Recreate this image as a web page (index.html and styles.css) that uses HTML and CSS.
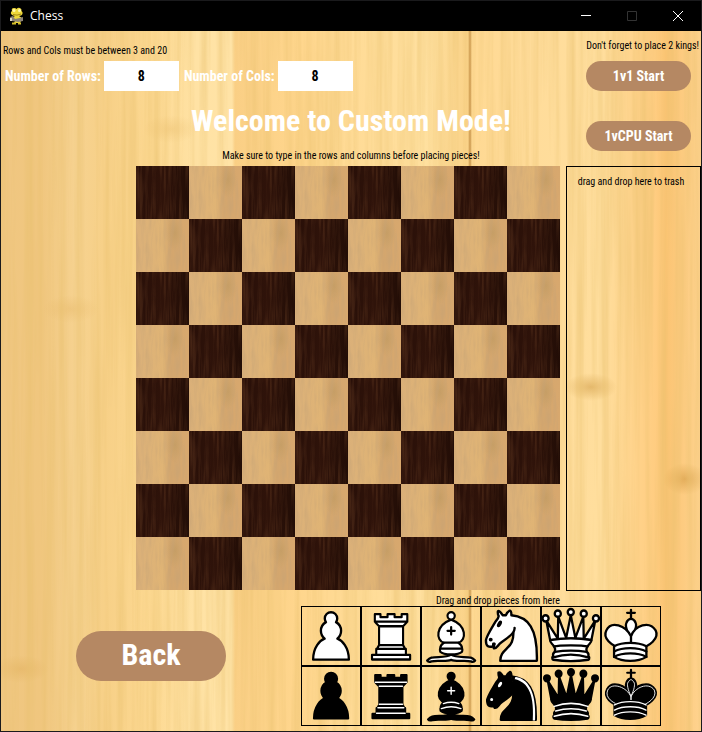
FILE: index.html
```html
<!DOCTYPE html>
<html lang="en">
<head>
<meta charset="utf-8">
<title>Chess</title>
<link rel="stylesheet" href="styles.css">
</head>
<body>
<svg class="defs" aria-hidden="true">
  <defs>
    <g id="pawn">
      <path d="M22.5 9c-2.21 0-4 1.79-4 4 0 .89.29 1.71.78 2.38C17.33 16.5 16 18.59 16 21c0 2.03.94 3.84 2.41 5.03C15.41 27.09 11 31.58 11 39.5H34C34 31.58 29.59 27.09 26.59 26.03 28.06 24.84 29 23.03 29 21 29 18.59 27.67 16.5 25.72 15.38 26.21 14.71 26.5 13.89 26.5 13c0-2.21-1.79-4-4-4z"/>
    </g>
    <g id="rook">
      <path d="M9 39H36V36H9zM12 36V32H33V36zM11 14V9H15V11H20V9H25V11H30V9H34V14L31 17H14zM31 17V29.5L32.5 32H12.5L14 29.5V17zM14 29.5H31M11 14H34"/>
    </g>
    <g id="bishop">
      <path d="M9 36C12.39 35.03 19.11 36.43 22.5 34 25.89 36.43 32.61 35.03 36 36 36 36 37.65 36.54 39 38 38.32 38.97 37.35 38.99 36 38.5 32.61 37.53 25.89 38.96 22.5 37.5 19.11 38.96 12.39 37.53 9 38.5 7.65 38.99 6.68 38.97 6 38 7.35 36.54 9 36 9 36z"/>
      <path d="M15 32C17.5 34.5 27.5 34.5 30 32 30.5 30.5 30 30 30 30 30 27.5 27.5 26 27.5 26 33 24.5 33.5 14.5 22.5 10.5 11.5 14.5 12 24.5 17.5 26 17.5 26 15 27.5 15 30 15 30 14.5 30.5 15 32z"/>
      <circle cx="22.5" cy="8" r="2.5"/>
    </g>
    <g id="knight">
      <path d="M22 10C32.5 11 38.5 18 38 39H15C15 30 25 32.5 23 18"/>
      <path d="M24 18C24.38 20.91 18.45 25.37 16 27 13 29 13.18 31.34 11 31 9.958 30.06 12.41 27.96 11 28 10 28 11.19 29.23 10 30 9 30 5.997 31 6 26 6 24 12 14 12 14 12 14 13.89 12.1 14 10.5 13.27 9.506 13.5 8.5 13.5 7.5 14.5 6.5 16.5 10 16.5 10H18.5C18.5 10 19.28 8.008 21 7 22 7 22 10 22 10"/>
    </g>
    <g id="knight-eye">
      <circle cx="9" cy="25.5" r=".5"/>
      <ellipse cx="14.5" cy="15.5" rx=".5" ry="1.5" transform="rotate(30 14.5 15.5)"/>
    </g>
    <g id="queen">
      <path d="M9 26C17.5 24.5 30 24.5 36 26L38.5 13.5 31 25 30.7 10.9 25.5 24.5 22.5 10 19.5 24.5 14.3 10.9 14 25 6.5 13.5z"/>
      <path d="M9 26C9 28 10.5 28 11.5 30 12.5 31.5 12.5 31 12 33.5 10.5 34.5 11 36 11 36 9.5 37.5 11 38.5 11 38.5 17.5 39.5 27.5 39.5 34 38.5 34 38.5 35.5 37.5 34 36 34 36 34.5 34.5 33 33.5 32.5 31 32.5 31.5 33.5 30 34.5 28 36 28 36 26 27.5 24.5 17.5 24.5 9 26z"/>
      <circle cx="6" cy="12" r="2"/><circle cx="14" cy="9" r="2"/><circle cx="22.5" cy="8" r="2"/><circle cx="31" cy="9" r="2"/><circle cx="39" cy="12" r="2"/>
    </g>
    <g id="king">
      <path d="M22.5 11.63V6M20 8H25"/>
      <path d="M22.5 25C22.5 25 27 17.5 25.5 14.5 25.5 14.5 24.5 12 22.5 12 20.5 12 19.5 14.5 19.5 14.5 18 17.5 22.5 25 22.5 25"/>
      <path d="M11.5 37C17 40.5 27 40.5 32.5 37V30C32.5 30 41.5 25.5 38.5 19.5 34.5 13 25 16 22.5 23.5V27 23.5C19 16 9.5 13 6.5 19.5 3.5 25.5 11.5 29.5 11.5 29.5z"/>
    </g>
    <path id="king-bands" d="M11.5 30C17 27 27 27 32.5 30M11.5 33.5C17 30.5 27 30.5 32.5 33.5M11.5 37C17 34 27 34 32.5 37"/>
  </defs>
</svg>

<div class="window">
  <header class="titlebar">
    <svg class="logo" viewBox="0 0 16 18" aria-hidden="true">
      <path fill="#eed83a" d="M3 4Q2 1 5 1 7 1 7.500 2 9 0 11 1 13 2 12.500 4 14 5 13.500 7 12.500 9 10 9L13 11 11 16H5L6 14 2 12 4 10 6 9Q1 8 2 5z"/>
      <circle cx="5" cy="3.500" r="1.500" fill="#fff9b0"/><circle cx="10.500" cy="3.500" r="1.500" fill="#fff9b0"/>
      <path stroke="#a88c13" fill="none" d="M4 7.500Q8 9 12 7"/>
      <path fill="#8e8578" d="M1 10L4 9 6 12 11 11 14 10 14 14 9 15 3 14z"/>
      <path fill="#d8d4c6" d="M1 11h2v3H1z"/>
      <path stroke="#d4be2a" stroke-width="2" d="M3 16.500H7M9 16.500H12"/>
    </svg>
    <span class="app-name">Chess</span>
    <div class="window-controls">
      <button type="button" aria-label="Minimize"><svg viewBox="0 0 10 10"><path d="M0 4.500H10"/></svg></button>
      <button type="button" aria-label="Maximize" disabled><svg viewBox="0 0 10 10"><path d="M.5.5H9.500V9.500H.5z"/></svg></button>
      <button type="button" aria-label="Close"><svg viewBox="0 0 10 10"><path d="M0 0L10 10M10 0L0 10"/></svg></button>
    </div>
  </header>

  <main class="stage">
    <section class="setup">
      <form class="size-form">
        <p class="note">Rows and Cols must be between 3 and 20</p>
        <div class="fields">
          <label for="rows">Number of Rows:</label>
          <input id="rows" type="text" inputmode="numeric" value="8">
          <label for="cols">Number of Cols:</label>
          <input id="cols" type="text" inputmode="numeric" value="8">
        </div>
      </form>
      <div class="intro">
        <h1>Welcome to Custom Mode!</h1>
        <p class="note">Make sure to type in the rows and columns before placing pieces!</p>
      </div>
      <div class="start">
        <p class="note">Don't forget to place 2 kings!</p>
        <button class="pill" type="button">1v1 Start</button>
        <button class="pill" type="button">1vCPU Start</button>
      </div>
    </section>

    <section class="play">
      <div class="board" id="board"></div>
      <aside class="trash"><p class="note">drag and drop here to trash</p></aside>
    </section>

    <section class="tray">
      <button class="pill pill-large" type="button">Back</button>
      <div class="pieces">
        <p class="note">Drag and drop pieces from here</p>
        <div class="palette">
          <svg class="piece white" viewBox="3.200 5 38.600 38.600" preserveAspectRatio="none" role="img" aria-label="White pawn"><use href="#pawn"/></svg>
          <svg class="piece white" viewBox="1.200 3.600 42.500 39.700" preserveAspectRatio="none" role="img" aria-label="White rook"><use href="#rook"/></svg>
          <svg class="piece white" viewBox="1.800 1.400 41.200 40.200" preserveAspectRatio="none" role="img" aria-label="White bishop"><use href="#bishop"/><path d="M17.500 26H27.500M15 30H30M22.500 15.500V20.500M20 18H25"/></svg>
          <svg class="piece white" viewBox="2.900 4.100 37.700 38.200" preserveAspectRatio="none" role="img" aria-label="White knight"><use href="#knight"/><use href="#knight-eye" class="ink"/></svg>
          <svg class="piece white" viewBox="3 4.100 39.300 38.400" preserveAspectRatio="none" role="img" aria-label="White queen"><use href="#queen"/><path class="line" d="M11.500 30C15 29 30 29 33.500 30M12 33.500C18 32.500 27 32.500 33 33.500M11 37Q22.500 33.500 34 37"/></svg>
          <svg class="piece white" viewBox="3 3.500 39 39.500" preserveAspectRatio="none" role="img" aria-label="White king"><use href="#king"/><use href="#king-bands" class="line"/></svg>
          <svg class="piece black" viewBox="2.200 4.400 40.500 40.200" preserveAspectRatio="none" role="img" aria-label="Black pawn"><use href="#pawn"/></svg>
          <svg class="piece black" viewBox=".6 2.700 44 41.700" preserveAspectRatio="none" role="img" aria-label="Black rook"><use href="#rook"/><path class="light" d="M12 35.500H33M13 31.700H32M14 29.300H31M14 16.800H31M11 14H34"/></svg>
          <svg class="piece black" viewBox="1 .8 42.800 41.800" preserveAspectRatio="none" role="img" aria-label="Black bishop"><use href="#bishop"/><path class="light" d="M17 27Q22.500 25 28 27M15.500 30.500Q22.500 28 29.500 30.500M22.500 15.500V20.500M20 18H25"/></svg>
          <svg class="piece black" viewBox="2 3.100 39.400 40" preserveAspectRatio="none" role="img" aria-label="Black knight"><use href="#knight"/><use href="#knight-eye" class="light"/><path fill="#fff" stroke="none" d="M24.550 10.400L24.100 11.850 24.600 12C27.750 13 31 14.490 33.200 18.750 35.500 23.010 36.500 29.060 36 39L36 39.500H37.450L37.500 39C38 28.940 36.620 22.150 34.250 17.660 31.880 13.170 28.460 11.020 25.060 10.500z"/></svg>
          <svg class="piece black" viewBox="1.900 3.900 41.200 39.500" preserveAspectRatio="none" role="img" aria-label="Black queen"><use href="#queen"/><path class="light" d="M11 30.500Q22.500 26.500 34 30.500M12 33.500Q22.500 30.500 33 33.500M11 37Q22.500 33.500 34 37"/></svg>
          <svg class="piece black" viewBox="2.500 3.400 40 41" preserveAspectRatio="none" role="img" aria-label="Black king"><use href="#king"/><use href="#king-bands" class="light"/><path class="light thin" d="M32 29.500C32 29.500 40.500 25.500 38.030 19.850 34.150 14 25 18 22.500 24.500V26.600 24.500C20 18 9.906 14 6.997 19.850 4.500 25.500 11.850 28.850 11.850 28.850M22.500 24C20 19 20 16 20.300 15 22 12 23 12 24.700 15 25 16 25 19 22.500 24"/></svg>
        </div>
      </div>
    </section>
  </main>
</div>
<script src="board.js"></script>
</body>
</html>
```
FILE: styles.css
```css
* { box-sizing: border-box; }

body {
  margin: 0;
  background: #000;
  color: #000;
  font-family: "Roboto Condensed", "Open Sans Condensed", "DejaVu Sans Condensed", sans-serif;
}

.defs { display: none; }
p, h1 { margin: 0; }
button, input { font: inherit; border: 0; }

.window {
  min-height: 100vh;
  display: flex;
  flex-direction: column;
  border: 1px solid #1a1a1c;
}

.titlebar {
  height: 30px;
  display: flex;
  align-items: center;
  gap: 5px;
  padding-left: 8px;
  background: #000;
  color: #fff;
}
.logo { width: 16px; height: 18px; }
.app-name { font: 12px/16px "Open Sans", "Noto Sans", sans-serif; }
.window-controls { display: flex; margin-left: auto; }
.window-controls button {
  width: 46px;
  height: 28px;
  display: grid;
  place-items: center;
  padding: 0;
  background: none;
  color: #fff;
}
.window-controls button:disabled { color: #333; }
.window-controls svg { width: 10px; height: 10px; fill: none; stroke: currentColor; overflow: visible; }

.stage {
  flex: 1;
  background:
    url("data:image/svg+xml,%3Csvg xmlns='http://www.w3.org/2000/svg' width='700' height='700'%3E%3Cfilter id='g' x='0' y='0' width='1' height='1'%3E%3CfeTurbulence type='fractalNoise' baseFrequency='.12 .003' numOctaves='4' seed='4'/%3E%3CfeColorMatrix values='0 0 0 0 .8 0 0 0 0 .52 0 0 0 0 .15 1 0 0 0 -.36'/%3E%3C/filter%3E%3Crect width='700' height='700' filter='url(%23g)'/%3E%3C/svg%3E"),
    radial-gradient(26px 14px at 590px 356px, #bd812366, transparent),
    radial-gradient(22px 16px at 684px 448px, #bd812366, transparent),
    radial-gradient(28px 14px at 70px 278px, #d49b3d33, transparent),
    radial-gradient(28px 14px at 20px 638px, #d49b3d44, transparent),
    radial-gradient(28px 14px at 170px 98px, #d49b3d33, transparent),
    linear-gradient(90deg, #f0c782 0, #f0c67e 40px, #f6d290 75px, #f7d087 105px, #fdd992 150px, #ffe2a4 195px, #ffe3a6 231px, #facf85 234px, #ffd68d 300px, #ffdb96 350px, #ffe09f 425px, #fad288 467px, #c9964c 469px, #ffd993 471px, #ffdc9a 530px, #ffde9d 600px, #ffcc80 655px, #fbc473 665px, #ffd38f 700px);
}

.note { font-size: 10px; line-height: 12px; white-space: nowrap; }

.setup {
  display: grid;
  grid-template-columns: 1fr auto 1fr;
  grid-template-rows: 60px 75px;
}
.size-form { grid-area: 1 / 1 / 2 / 3; padding: 14px 0 0 2px; }
.fields { display: flex; align-items: center; gap: 3px; margin-top: 4px; }
.fields label {
  padding-left: 2px;
  color: #fff;
  font-size: 14px;
  font-weight: bold;
  line-height: 30px;
}
.fields input {
  width: 75px;
  height: 30px;
  padding: 0;
  background: #fff;
  font-size: 14px;
  font-weight: bold;
  text-align: center;
}
.intro { grid-area: 2 / 2; padding-top: 8px; text-align: center; }
.intro h1 { color: #fff; font-size: 30px; line-height: 44px; white-space: nowrap; }
.intro .note { padding-top: 7px; }

.start {
  grid-area: 1 / 3 / 3 / 4;
  justify-self: end;
  display: flex;
  flex-direction: column;
  align-items: flex-end;
  padding-top: 9px;
}
.start .note { padding-right: 2px; }
.start .pill { margin: 9px 10px 21px 0; }
.start .pill + .pill { margin-bottom: 0; }

.pill {
  width: 105px;
  height: 30px;
  padding: 0;
  border-radius: 25px;
  background: #b58863;
  color: #fff;
  font-size: 14px;
  font-weight: bold;
}
.pill-large { width: 150px; height: 50px; padding-bottom: 4px; font-size: 30px; }

.play {
  display: grid;
  grid-template-columns: 135px 1fr 135px;
}
.board {
  grid-column: 2;
  display: grid;
  grid-template-columns: repeat(8, 1fr);
  margin: 0 6px 1px 0;
}
.square { aspect-ratio: 1; }
.square.dark {
  background:
    url("data:image/svg+xml,%3Csvg xmlns='http://www.w3.org/2000/svg' width='53' height='53'%3E%3Cfilter id='g' x='0' y='0' width='1' height='1'%3E%3CfeTurbulence type='fractalNoise' baseFrequency='.3 .02' numOctaves='3' seed='8'/%3E%3CfeColorMatrix values='0 0 0 0 .32 0 0 0 0 .12 0 0 0 0 .04 .6 0 0 0 -.23'/%3E%3C/filter%3E%3Crect width='53' height='53' filter='url(%23g)'/%3E%3C/svg%3E"),
    linear-gradient(90deg, #280f08, #2f130a 50%, #220d06);
}
.square.light {
  background:
    url("data:image/svg+xml,%3Csvg xmlns='http://www.w3.org/2000/svg' width='53' height='53'%3E%3Cfilter id='g' x='0' y='0' width='1' height='1'%3E%3CfeTurbulence type='fractalNoise' baseFrequency='.3 .04' numOctaves='3' seed='3'/%3E%3CfeColorMatrix values='0 0 0 0 .55 0 0 0 0 .36 0 0 0 0 .18 1 0 0 0 -.4'/%3E%3C/filter%3E%3Crect width='53' height='53' filter='url(%23g)'/%3E%3C/svg%3E"),
    radial-gradient(9px 18px at 39px 14px, #b9975f88, transparent),
    linear-gradient(90deg, #dab079, #e0b475 50%, #d3a66e 65%, #d8a86e);
}

.trash { border: 1px solid #000; padding-top: 9px; text-align: center; }
.trash .note { padding-right: 5px; }

.tray {
  display: flex;
  justify-content: space-between;
  align-items: flex-start;
  padding: 5px 40px 5px 75px;
}
.tray .pill { margin-top: 35px; }
.pieces .note { padding-left: 135px; line-height: 10px; }
.palette {
  display: grid;
  grid-template-columns: repeat(6, 60px);
  grid-auto-rows: 60px;
}
.piece {
  width: 60px;
  height: 60px;
  outline: 1px solid #000;
  outline-offset: -1px;
  stroke: #000;
  stroke-width: 1.5px;
  stroke-linecap: round;
  stroke-linejoin: round;
}
.white { fill: #fff; }
.black { fill: #000; }
.ink { fill: #000; }
.line { fill: none; }
.light { fill: none; stroke: #fff; stroke-width: 1px; }
.thin { stroke-width: .6px; }
```
FILE: board.js
```js
const board = document.getElementById("board");
for (let row = 0; row < 8; row++) {
  for (let col = 0; col < 8; col++) {
    const square = document.createElement("div");
    square.className = (row + col) % 2 ? "square light" : "square dark";
    board.append(square);
  }
}
```
